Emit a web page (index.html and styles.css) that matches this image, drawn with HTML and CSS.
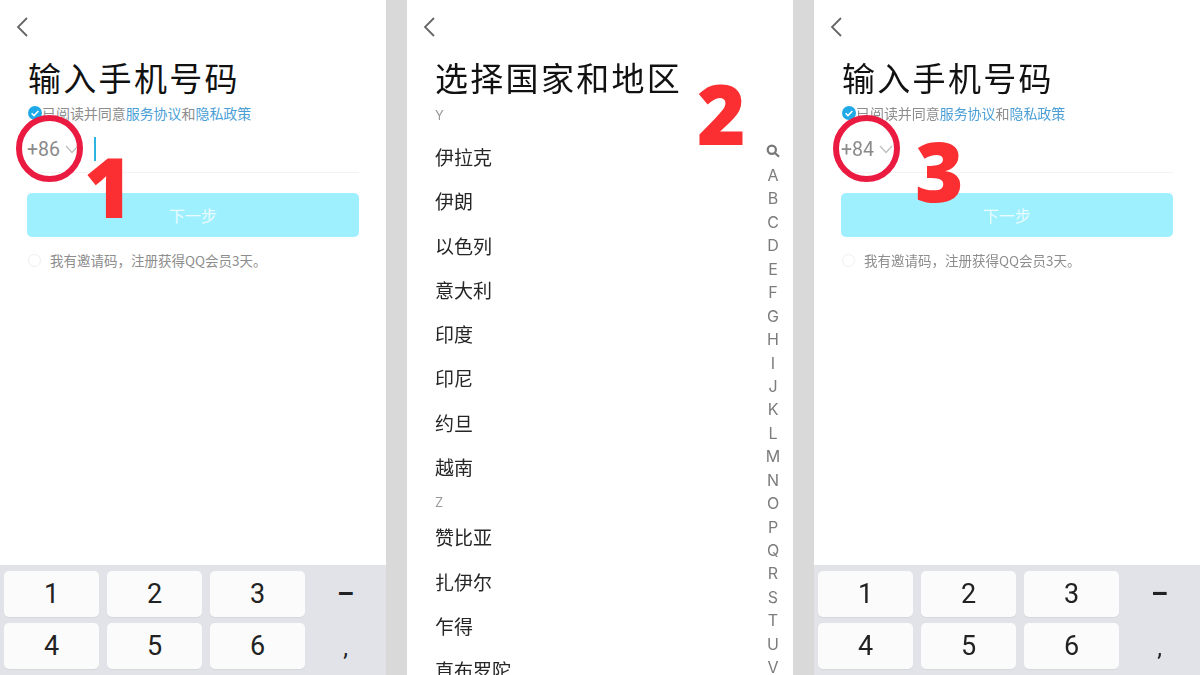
FILE: index.html
```html
<!DOCTYPE html>
<html lang="zh">
<head>
<meta charset="utf-8">
<title>输入手机号码</title>
<link rel="stylesheet" href="styles.css">
</head>
<body>
<main class="screens">

  <section class="phone">
    <svg class="back" width="12" height="20" viewBox="0 0 12 20"><path d="M11 1 2 10l9 9"/></svg>
    <h1 class="title">输入手机号码</h1>
    <p class="agree"><svg class="tick" width="14" height="14" viewBox="0 0 14 14"><circle cx="7" cy="7" r="7"/><path d="M3.6 7.2 6 9.6l4.4-4.6"/></svg><span>已阅读并同意</span><a>服务协议</a><span>和</span><a>隐私政策</a></p>
    <div class="input-row">
      <span class="code">+86</span>
      <svg class="chev" width="14" height="9" viewBox="0 0 14 9"><path d="M1 1l6 6.5L13 1"/></svg>
      <span class="caret"></span>
    </div>
    <button class="next">下一步</button>
    <p class="invite"><span class="radio"></span>我有邀请码，注册获得QQ会员3天。</p>
    <div class="keyboard">
      <div class="key">1</div><div class="key">2</div><div class="key">3</div><div class="sym">–</div>
      <div class="key">4</div><div class="key">5</div><div class="key">6</div><div class="sym sym-low">,</div>
    </div>
    <div class="ring ring-a"></div>
    <div class="mark mark-1">1</div>
  </section>

  <section class="phone">
    <svg class="back" width="12" height="20" viewBox="0 0 12 20"><path d="M11 1 2 10l9 9"/></svg>
    <h1 class="title">选择国家和地区</h1>
    <div class="group">Y</div>
    <ul class="countries countries-y">
      <li>伊拉克</li><li>伊朗</li><li>以色列</li><li>意大利</li><li>印度</li><li>印尼</li><li>约旦</li><li>越南</li>
    </ul>
    <div class="group group-z">Z</div>
    <ul class="countries countries-z">
      <li>赞比亚</li><li>扎伊尔</li><li>乍得</li><li>直布罗陀</li>
    </ul>
    <div class="index">
      <svg class="search" width="14" height="14" viewBox="0 0 14 14"><circle cx="5.8" cy="5.8" r="4.1"/><path d="M9 9l4 3.8"/></svg>
      <span>A</span><span>B</span><span>C</span><span>D</span><span>E</span><span>F</span><span>G</span><span>H</span><span>I</span><span>J</span><span>K</span><span>L</span><span>M</span><span>N</span><span>O</span><span>P</span><span>Q</span><span>R</span><span>S</span><span>T</span><span>U</span><span>V</span>
    </div>
    <div class="mark mark-2">2</div>
  </section>

  <section class="phone">
    <svg class="back" width="12" height="20" viewBox="0 0 12 20"><path d="M11 1 2 10l9 9"/></svg>
    <h1 class="title">输入手机号码</h1>
    <p class="agree"><svg class="tick" width="14" height="14" viewBox="0 0 14 14"><circle cx="7" cy="7" r="7"/><path d="M3.6 7.2 6 9.6l4.4-4.6"/></svg><span>已阅读并同意</span><a>服务协议</a><span>和</span><a>隐私政策</a></p>
    <div class="input-row">
      <span class="code">+84</span>
      <svg class="chev" width="14" height="9" viewBox="0 0 14 9"><path d="M1 1l6 6.5L13 1"/></svg>
    </div>
    <button class="next">下一步</button>
    <p class="invite"><span class="radio"></span>我有邀请码，注册获得QQ会员3天。</p>
    <div class="keyboard">
      <div class="key">1</div><div class="key">2</div><div class="key">3</div><div class="sym">–</div>
      <div class="key">4</div><div class="key">5</div><div class="key">6</div><div class="sym sym-low">,</div>
    </div>
    <div class="ring ring-c"></div>
    <div class="mark mark-3">3</div>
  </section>

</main>
</body>
</html>
```
FILE: styles.css
```css
* { box-sizing: border-box; }
html, body { margin: 0; height: 675px; overflow: hidden; }
body {
  background: #d9d9d9;
  font-family: "Noto Sans CJK SC", "Noto Sans", sans-serif;
}
.screens {
  display: grid;
  grid-template-columns: repeat(3, 386px);
  column-gap: 21px;
  height: 675px;
  filter: blur(0.35px);
}
.phone {
  position: relative;
  height: 675px;
  overflow: hidden;
  background: #fff;
  display: flex;
  flex-direction: column;
}
.back {
  display: block;
  margin: 17px 0 0 16px;
  flex: none;
  fill: none;
  stroke: #666;
  stroke-width: 1.8;
}
.title {
  margin: 21px 0 0 28px;
  height: 38px;
  line-height: 38px;
  font-size: 33px;
  font-weight: 400;
  letter-spacing: 2.3px;
  color: #111;
  white-space: nowrap;
}
.agree {
  margin: 8px 0 0 28px;
  height: 18px;
  display: flex;
  align-items: center;
  font-size: 14px;
  line-height: 18px;
  letter-spacing: -0.05px;
  color: #8d8d8d;
  white-space: nowrap;
}
.agree a { color: #4b9fd6; }
.tick { flex: none; }
.tick circle { fill: #1fa9e6; }
.tick path { fill: none; stroke: #fff; stroke-width: 1.5; }
.input-row {
  margin: 8px 27px 0 27px;
  height: 43px;
  flex: none;
  padding: 3px 0 7px;
  border-bottom: 1px solid #f3f3f3;
  display: flex;
  align-items: center;
}
.code {
  width: 38px;
  font-family: "Roboto", sans-serif;
  font-size: 19.5px;
  color: #8a8a8a;
}
.chev { flex: none; fill: none; stroke: #bdbdbd; stroke-width: 1.2; }
.caret {
  width: 2px;
  height: 24px;
  margin-left: 15px;
  background: #2db5de;
}
.next {
  display: block;
  margin: 20px 27px 0 27px;
  width: 332px;
  height: 44px;
  flex: none;
  border: 0;
  border-radius: 5px;
  background: #9ff0fe;
  color: #e9fbff;
  font-family: inherit;
  font-size: 16px;
  padding: 0;
}
.invite {
  margin: 14px 0 0 28px;
  height: 18px;
  display: flex;
  align-items: center;
  font-size: 13.5px;
  line-height: 18px;
  color: #8d8d8d;
  white-space: nowrap;
}
.radio {
  width: 13px;
  height: 13px;
  margin-right: 9px;
  border: 1px solid #eeeeee;
  border-radius: 50%;
  flex: none;
}
.keyboard {
  margin-top: auto;
  height: 110px;
  flex: none;
  padding: 6px 0 0 4px;
  background: #e1e3e8;
  display: grid;
  grid-template-columns: 95px 95px 95px 1fr;
  grid-auto-rows: 46px;
  column-gap: 8px;
  row-gap: 6px;
  font-family: "Roboto", sans-serif;
  color: #222;
  font-size: 27px;
}
.key {
  background: #fbfbfb;
  border-radius: 5px;
  display: flex;
  align-items: center;
  justify-content: center;
  box-shadow: 0 1px 0 #d6d8dc;
}
.sym {
  display: flex;
  align-items: center;
  justify-content: center;
  padding-right: 8px;
  font-weight: 700;
}
.sym-low { padding-top: 4px; font-weight: 400; font-size: 24px; }
.group {
  margin: 10px 0 0 28px;
  height: 18px;
  line-height: 18px;
  font-family: "Inter", sans-serif;
  font-size: 13px;
  color: #9a9a9a;
}
.group-z { margin-top: 4px; }
.countries {
  margin: 0;
  padding: 0 0 0 28px;
  list-style: none;
  flex: none;
}
.countries li {
  height: 44.3px;
  line-height: 44.3px;
  font-size: 19px;
  color: #262626;
  white-space: nowrap;
}
.countries-y { margin-top: 11px; }
.countries-z { margin-top: 4px; }
.index {
  position: absolute;
  top: 140px;
  right: 5px;
  width: 30px;
  display: flex;
  flex-direction: column;
  align-items: center;
  font-family: "Inter", sans-serif;
  font-size: 16px;
  color: #7c7c7c;
}
.index span { height: 23.45px; line-height: 23.45px; }
.search {
  flex: none;
  margin: 4px 0 6px;
  fill: none;
  stroke: #777;
  stroke-width: 2.2;
}
.ring {
  position: absolute;
  width: 67px;
  height: 67px;
  top: 115px;
  border: 6px solid #ea1a40;
  border-radius: 50%;
}
.ring-a { left: 16px; }
.ring-c { left: 19px; }
.mark {
  position: absolute;
  font-family: "Open Sans", sans-serif;
  font-weight: 800;
  font-size: 83px;
  line-height: 83px;
  color: #fb2f31;
}
.mark-1 { left: 84px; top: 144px; }
.mark-2 { left: 290px; top: 71px; }
.mark-3 { left: 101px; top: 128px; }
```
